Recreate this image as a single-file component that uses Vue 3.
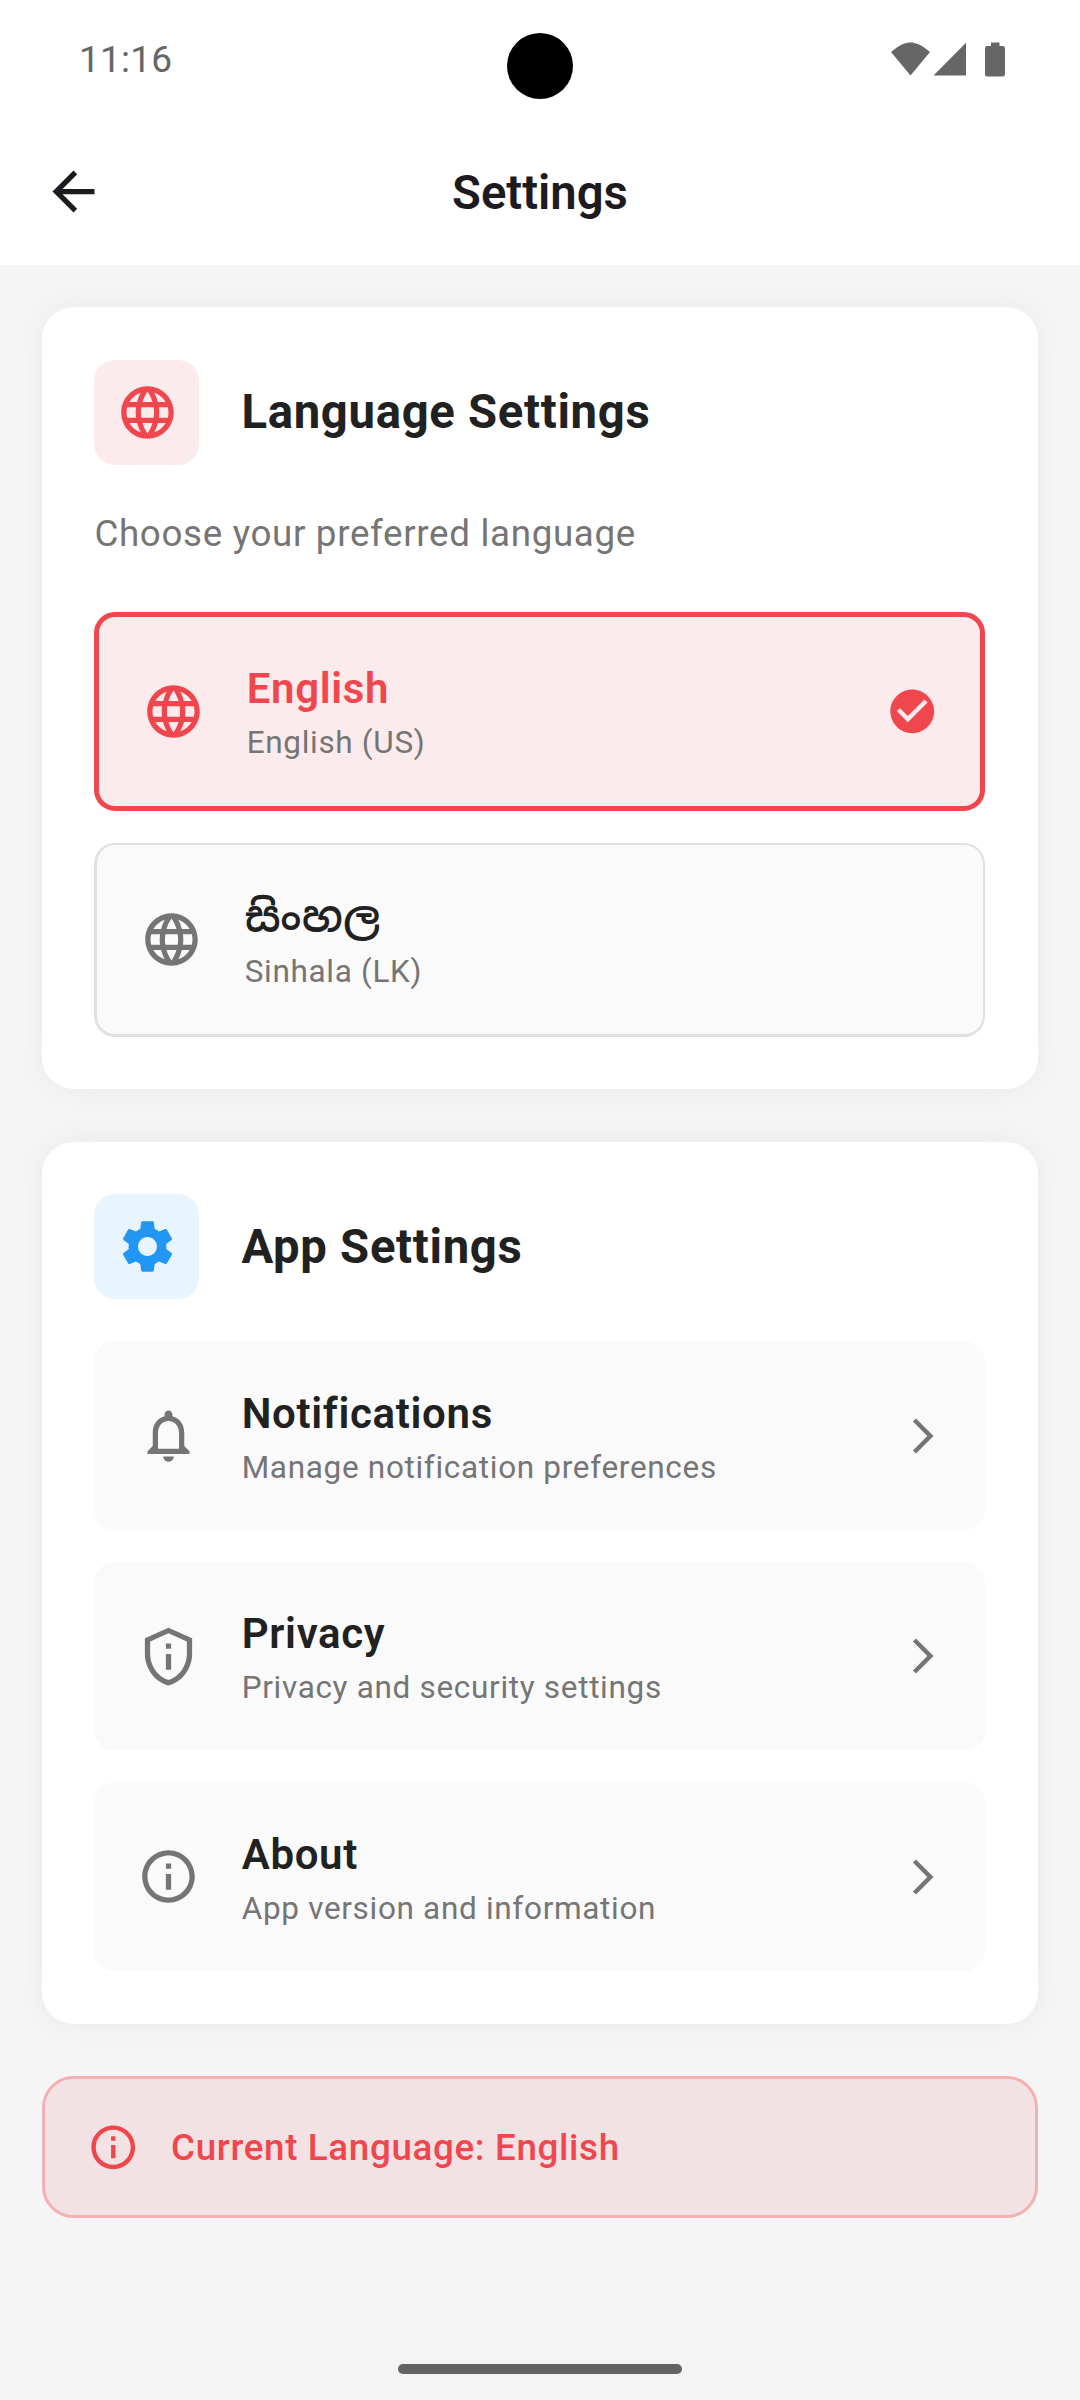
<script setup>
import { ref } from 'vue'

const icons = {
  back: 'M20 11H7.83l5.59-5.59L12 4l-8 8 8 8 1.41-1.41L7.83 13H20v-2z',
  globe:
    'M11.99 2C6.47 2 2 6.48 2 12s4.47 10 9.99 10C17.52 22 22 17.52 22 12S17.52 2 11.99 2zm6.93 6h-2.95c-.32-1.25-.78-2.45-1.38-3.56 1.84.63 3.37 1.91 4.33 3.56zM12 4.04c.83 1.2 1.48 2.53 1.91 3.96h-3.82c.43-1.43 1.08-2.76 1.91-3.96zM4.26 14C4.1 13.36 4 12.69 4 12s.1-1.36.26-2h3.38c-.08.66-.14 1.32-.14 2s.06 1.34.14 2H4.26zm.82 2h2.95c.32 1.25.78 2.45 1.38 3.56-1.84-.63-3.37-1.9-4.33-3.56zm2.95-8H5.08c.96-1.66 2.49-2.93 4.33-3.56C8.81 5.55 8.35 6.75 8.03 8zM12 19.96c-.83-1.2-1.48-2.53-1.91-3.96h3.82c-.43 1.43-1.08 2.76-1.91 3.96zM14.34 14H9.66c-.09-.66-.16-1.32-.16-2s.07-1.35.16-2h4.68c.09.65.16 1.32.16 2s-.07 1.34-.16 2zm.25 5.56c.6-1.11 1.06-2.31 1.38-3.56h2.95c-.96 1.65-2.49 2.93-4.33 3.56zM16.36 14c.08-.66.14-1.32.14-2s-.06-1.34-.14-2h3.38c.16.64.26 1.31.26 2s-.1 1.36-.26 2h-3.38z',
  gear:
    'M19.14 12.94c.04-.3.06-.61.06-.94 0-.32-.02-.64-.07-.94l2.03-1.58c.18-.14.23-.41.12-.61l-1.92-3.32c-.12-.22-.37-.29-.59-.22l-2.39.96c-.5-.38-1.03-.7-1.62-.94l-.36-2.54c-.04-.24-.24-.41-.48-.41h-3.84c-.24 0-.43.17-.47.41l-.36 2.54c-.59.24-1.13.57-1.62.94l-2.39-.96c-.22-.08-.47 0-.59.22L2.74 8.87c-.12.21-.08.47.12.61l2.03 1.58c-.05.3-.09.63-.09.94s.02.64.07.94l-2.03 1.58c-.18.14-.23.41-.12.61l1.92 3.32c.12.22.37.29.59.22l2.39-.96c.5.38 1.03.7 1.62.94l.36 2.54c.05.24.24.41.48.41h3.84c.24 0 .44-.17.47-.41l.36-2.54c.59-.24 1.13-.56 1.62-.94l2.39.96c.22.08.47 0 .59-.22l1.92-3.32c.12-.22.07-.47-.12-.61l-2.01-1.58zM12 15.6c-1.98 0-3.6-1.62-3.6-3.6s1.62-3.6 3.6-3.6 3.6 1.62 3.6 3.6-1.62 3.6-3.6 3.6z',
  bell:
    'M12 22c1.1 0 2-.9 2-2h-4c0 1.1.9 2 2 2zm6-6v-5c0-3.07-1.63-5.64-4.5-6.32V4c0-.83-.67-1.5-1.5-1.5s-1.5.67-1.5 1.5v.68C7.64 5.36 6 7.92 6 11v5l-2 2v1h16v-1l-2-2zm-2 1H8v-6c0-2.48 1.51-4.5 4-4.5s4 2.02 4 4.5v6z',
  shield:
    'M12 1L3 5v6c0 5.55 3.84 10.74 9 12 5.16-1.26 9-6.45 9-12V5l-9-4zm7 10c0 4.52-2.98 8.69-7 9.93-4.02-1.24-7-5.41-7-9.93V6.3l7-3.11 7 3.11V11zm-8 0h2v6h-2zm0-4h2v2h-2z',
  info:
    'M11 7h2v2h-2zm0 4h2v6h-2zm1-9C6.48 2 2 6.48 2 12s4.48 10 10 10 10-4.48 10-10S17.52 2 12 2zm0 18c-4.41 0-8-3.59-8-8s3.59-8 8-8 8 3.59 8 8-3.59 8-8 8z',
  check:
    'M12 2C6.48 2 2 6.48 2 12s4.48 10 10 10 10-4.48 10-10S17.52 2 12 2zm-2 15l-5-5 1.41-1.41L10 14.17l7.59-7.59L19 8l-9 9z',
  forward: 'M6.23 20.23L8 22l10-10L8 2 6.23 3.77 14.46 12z',
}

const languages = [
  { code: 'en', name: 'English', detail: 'English (US)' },
  { code: 'si', name: 'සිංහල', detail: 'Sinhala (LK)' },
]
const current = ref('en')

const items = [
  { icon: 'bell', title: 'Notifications', detail: 'Manage notification preferences' },
  { icon: 'shield', title: 'Privacy', detail: 'Privacy and security settings' },
  { icon: 'info', title: 'About', detail: 'App version and information' },
]
</script>

<template>
  <div class="screen">
    <header class="top">
      <div class="status">
        <span class="clock">11:16</span>
        <svg class="status-icons" viewBox="0 0 116 36">
          <path d="M0 11C9 3.300 15 1.500 19.500 1.500S30 3.300 39 11L19.500 34.500z" />
          <path d="M42.500 34.500H75V1.800z" />
          <path d="M100 1.500h8.500v3.500h3.200q2.300 0 2.300 2.300v26q0 2.200-2.300 2.200h-15.400q-2.300 0-2.300-2.200v-26q0-2.300 2.300-2.300h3.700z" />
        </svg>
        <span class="camera"></span>
      </div>
      <div class="appbar">
        <button class="back" aria-label="Back">
          <svg class="i24" viewBox="0 0 24 24"><path :d="icons.back" /></svg>
        </button>
        <h1>Settings</h1>
      </div>
    </header>

    <main>
      <section class="card">
        <div class="card-head">
          <span class="badge red"><svg class="i24" viewBox="0 0 24 24"><path :d="icons.globe" /></svg></span>
          <h2>Language Settings</h2>
        </div>
        <p class="hint">Choose your preferred language</p>
        <div class="options">
          <div
            v-for="l in languages"
            :key="l.code"
            class="option"
            :class="{ selected: l.code === current }"
            @click="current = l.code"
          >
            <svg class="i24" viewBox="0 0 24 24"><path :d="icons.globe" /></svg>
            <div class="text">
              <div class="title">{{ l.name }}</div>
              <div class="detail">{{ l.detail }}</div>
            </div>
            <svg v-if="l.code === current" class="i20" viewBox="0 0 24 24"><path :d="icons.check" /></svg>
          </div>
        </div>
      </section>

      <section class="card">
        <div class="card-head">
          <span class="badge blue"><svg class="i24" viewBox="0 0 24 24"><path :d="icons.gear" /></svg></span>
          <h2>App Settings</h2>
        </div>
        <div class="items">
          <div v-for="it in items" :key="it.title" class="item">
            <svg class="i24" viewBox="0 0 24 24"><path :d="icons[it.icon]" /></svg>
            <div class="text">
              <div class="title">{{ it.title }}</div>
              <div class="detail">{{ it.detail }}</div>
            </div>
            <svg class="i16" viewBox="0 0 24 24"><path :d="icons.forward" /></svg>
          </div>
        </div>
      </section>

      <section class="banner">
        <svg class="i20" viewBox="0 0 24 24"><path :d="icons.info" /></svg>
        <span>Current Language: {{ current === 'en' ? 'English' : 'සිංහල' }}</span>
      </section>
    </main>

    <footer><span class="pill"></span></footer>
  </div>
</template>

<style>
body {
  margin: 0;
}
</style>

<style scoped>
.screen {
  display: flex;
  flex-direction: column;
  width: 1080px;
  height: 2400px;
  overflow: hidden;
  background: #f5f5f5;
  color: #212121;
  font-family: Roboto, "Noto Sans Sinhala", sans-serif;
}
svg {
  flex: none;
  display: block;
  fill: currentColor;
}
.i24 { width: 63px; height: 63px; }
.i20 { width: 52.5px; height: 52.5px; }
.i16 { width: 42px; height: 42px; }

.top {
  height: 265px;
  background: #fff;
}
.status {
  position: relative;
  display: flex;
  align-items: center;
  justify-content: space-between;
  height: 118px;
  padding: 0 73px 0 79px;
  color: #666;
}
.clock {
  padding-top: 2px;
  font-size: 37px;
  letter-spacing: 0.2px;
  line-height: 44px;
}
.status-icons {
  width: 116px;
  height: 36px;
}
.camera {
  position: absolute;
  left: 507px;
  top: 33px;
  width: 66px;
  height: 66px;
  border-radius: 50%;
  background: #000;
}
.appbar {
  display: grid;
  grid-template-columns: 147px 1fr 147px;
  align-items: center;
  height: 147px;
  color: #1d1b20;
}
.back {
  display: flex;
  padding: 0 0 0 42px;
  border: 0;
  background: none;
  color: inherit;
}
h1 {
  margin: 0;
  padding-top: 2px;
  text-align: center;
  font-size: 47.25px;
  font-weight: 600;
  line-height: 60px;
}

main {
  display: flex;
  flex-direction: column;
  gap: 52.5px;
  padding: 42px 42px 0;
}
.card {
  padding: 52.5px 52.6px 52.5px 52.4px;
  border-radius: 31.5px;
  background: #fff;
  box-shadow: 0 0 33px rgba(0, 0, 0, 0.05);
}
.card-head {
  display: flex;
  align-items: center;
  gap: 42px;
}
.badge {
  box-sizing: border-box;
  display: flex;
  align-items: center;
  padding-left: 21.2px;
  width: 105px;
  height: 105px;
  border-radius: 21px;
}
.red { background: #fcebec; color: #f0474f; }
.blue { background: #e8f4fe; color: #2196f3; }
h2 {
  margin: 0;
  font-size: 47.25px;
  font-weight: 700;
  letter-spacing: 0.7px;
  line-height: 68px;
}
.hint {
  height: 52.5px;
  margin: 42px 0 52.5px;
  color: #757575;
  font-size: 36.75px;
  letter-spacing: 0.66px;
  line-height: 54.5px;
}
.options,
.items {
  display: flex;
  flex-direction: column;
  gap: 31.5px;
}
.options { gap: 32.4px; }
.items { margin-top: 42px; }
.option,
.item {
  display: flex;
  align-items: center;
  gap: 42px;
  padding: 42px 41.7px 42px 42.3px;
  border-radius: 21px;
  background: #fafafa;
  color: #757575;
}
.option {
  border: 2px solid #e0e0e0;
  border-bottom-width: 3px;
  border-left-width: 3px;
}
.option.selected {
  border: 5px solid #f0474f;
  background: #fcebec;
  color: #f0474f;
}
.text {
  flex: 1;
  padding-top: 0.3px;
  margin-bottom: -0.3px;
}
.option:not(.selected) .text {
  padding-top: 0.8px;
  margin-bottom: -0.8px;
}
.title {
  height: 60px;
  color: #212121;
  font-size: 42px;
  font-weight: 600;
  letter-spacing: 0.66px;
  line-height: 60px;
}
.selected .title { color: #f0474f; }
.detail {
  height: 45px;
  color: #757575;
  font-size: 31.5px;
  letter-spacing: 0.68px;
  line-height: 47px;
}
.banner {
  box-sizing: border-box;
  display: flex;
  align-items: center;
  gap: 31.5px;
  height: 142px;
  padding: 0 42px;
  border: 3px solid #f5b0b4;
  border-radius: 31.5px;
  background: #f3e2e3;
  color: #f0474f;
  font-size: 36.75px;
  font-weight: 500;
  letter-spacing: 0.66px;
  line-height: 50.5px;
}
.banner span { padding-top: 2px; }
footer {
  display: flex;
  justify-content: center;
  margin-top: auto;
  padding-bottom: 26px;
}
.pill {
  width: 284px;
  height: 10px;
  border-radius: 5px;
  background: #636363;
}
</style>
